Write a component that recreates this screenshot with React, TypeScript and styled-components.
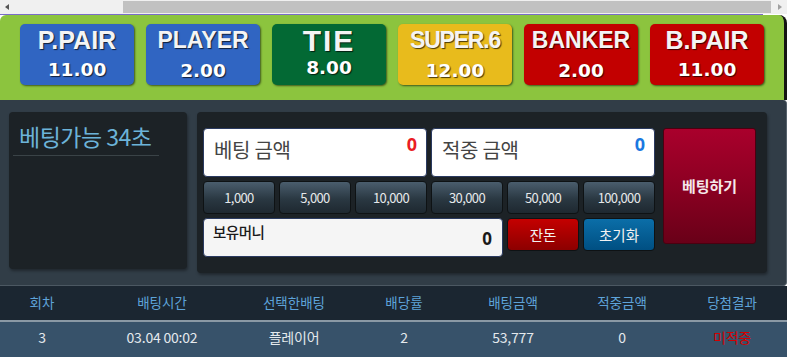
import React from "react";
import styled, { createGlobalStyle } from "styled-components";

const Global = createGlobalStyle`
  html, body { margin: 0; padding: 0; background: #ffffff; }
  body { font-family: "Noto Sans CJK KR", "Noto Sans", sans-serif; overflow: hidden; }
  * { box-sizing: border-box; }
`;

const Page = styled.div`
  width: 787px;
  display: flex;
  flex-direction: column;
`;

const ScrollBar = styled.div`
  height: 14px;
  display: flex;
  background: #f0f0f0;
`;

const ArrowBox = styled.div`
  width: 14px;
  display: flex;
  align-items: center;
  justify-content: center;
`;

const Tri = styled.div<{ $dir: "l" | "r" }>`
  width: 0;
  height: 0;
  border-top: 3.5px solid transparent;
  border-bottom: 3.5px solid transparent;
  ${(p) => (p.$dir === "l" ? "border-right: 4px solid #555;" : "border-left: 4px solid #a0a0a0;")}
`;

const Track = styled.div`
  flex: 1;
  display: flex;
  padding: 1px 2px 1px 109px;
`;

const Thumb = styled.div`
  flex: 1;
  background: #c1c1c1;
`;

const TopLine = styled.div`
  height: 1px;
  width: 763px;
  background: #7a6cc8;
`;

const GreenPanel = styled.div`
  height: 85px;
  background: #8cc43e;
  border-radius: 6px 8px 0 0;
  border-right: 3px solid #141414;
  display: flex;
  gap: 12px;
  padding: 9px 0 0 20px;
`;

const BetButton = styled.div<{ $bg: string }>`
  width: 114px;
  height: 61px;
  background: ${(p) => p.$bg};
  border-radius: 5px;
  box-shadow: 1px 1px 2px rgba(0, 0, 0, 0.55);
  display: flex;
  flex-direction: column;
  align-items: center;
  color: #f4f4f4;
  text-shadow: 1px 1px 1px rgba(0, 0, 0, 0.7);
`;

const BetLabel = styled.div<{ $size: number; $ls: number; $top: number }>`
  font-family: "Liberation Sans", Arial, sans-serif;
  font-weight: bold;
  font-size: ${(p) => p.$size}px;
  letter-spacing: ${(p) => p.$ls}px;
  line-height: ${(p) => p.$size}px;
  margin-top: ${(p) => p.$top}px;
  height: 28px;
  white-space: nowrap;
`;

const BetOdds = styled.div`
  font-family: "DejaVu Sans", Verdana, sans-serif;
  font-weight: bold;
  font-size: 18.5px;
  line-height: 20px;
  color: #ffffff;
  margin-top: 4px;
`;

const DarkSection = styled.div`
  height: 186px;
  background: #313d47;
  border-right: 1px solid #56626c;
  border-bottom: 1px solid #4c5862;
  border-radius: 0 4px 4px 0;
  display: flex;
  align-items: flex-start;
  gap: 10px;
  padding: 12px 0 0 9px;
`;

const TimerPanel = styled.div`
  width: 178px;
  height: 157px;
  background: #1c2226;
  border-radius: 4px;
  box-shadow: 1px 2px 3px rgba(0, 0, 0, 0.35);
  padding: 10px 0 0 4px;
`;

const TimerTitle = styled.div`
  width: 146px;
  font-size: 23px;
  line-height: 28px;
  color: #6cb3d9;
  padding: 0 0 5px 6px;
  border-bottom: 1px solid #3a4347;
  letter-spacing: -0.5px;
  white-space: nowrap;
`;

const BetPanel = styled.div`
  width: 570px;
  height: 161px;
  background: #1c2226;
  border-radius: 4px;
  box-shadow: 1px 2px 3px rgba(0, 0, 0, 0.35);
  display: flex;
  align-items: flex-start;
  gap: 8px;
  padding: 16px 11px 16px 6px;
`;

const BetGrid = styled.div`
  width: 452px;
  display: grid;
  grid-template-columns: repeat(6, 72px);
  grid-template-rows: 49px 33px 39px;
  gap: 4px;
  align-items: start;
`;

const AmountBox = styled.div<{ $span: string }>`
  grid-column: ${(p) => p.$span};
  height: 49px;
  background: #ffffff;
  border: 1px solid #2a3a60;
  border-radius: 4px;
  display: flex;
  justify-content: space-between;
  padding: 4px 9px 0 10px;
`;

const AmountLabel = styled.div`
  font-size: 20px;
  line-height: 26px;
  color: #444444;
  margin-top: 4px;
  letter-spacing: -0.3px;
`;

const AmountValue = styled.div<{ $color: string }>`
  font-size: 18px;
  line-height: 22px;
  font-weight: bold;
  color: ${(p) => p.$color};
  font-family: "Noto Sans", sans-serif;
`;

const Chip = styled.div`
  height: 33px;
  border: 1px solid #0e1214;
  border-radius: 4px;
  background: linear-gradient(to bottom, #4a5d6d 0%, #2a3842 55%, #1e2830 100%);
  color: #e6e8ea;
  font-size: 13px;
  letter-spacing: -0.6px;
  display: flex;
  align-items: center;
  justify-content: center;
`;

const MoneyBox = styled.div`
  grid-column: 1 / 5;
  height: 39px;
  background: #f5f5f5;
  border: 1px solid #2a3a60;
  border-radius: 4px;
  display: flex;
  justify-content: space-between;
  padding: 4px 10px 0 9px;
`;

const MoneyLabel = styled.div`
  font-size: 14.5px;
  line-height: 18px;
  font-weight: 500;
  color: #1a1a1a;
  letter-spacing: -0.5px;
`;

const MoneyValue = styled.div`
  font-family: "Noto Sans", sans-serif;
  font-size: 17px;
  line-height: 20px;
  font-weight: bold;
  color: #1a1a1a;
  margin-top: 6px;
`;

const ActionButton = styled.div<{ $top: string; $bottom: string }>`
  height: 33px;
  border: 1px solid #0e1214;
  border-radius: 4px;
  background: linear-gradient(to bottom, ${(p) => p.$top}, ${(p) => p.$bottom});
  color: #f2f2f2;
  font-size: 14.5px;
  display: flex;
  align-items: center;
  justify-content: center;
`;

const SubmitButton = styled.div`
  width: 93px;
  height: 116px;
  border: 1px solid #4a0010;
  border-radius: 3px;
  background: linear-gradient(to bottom, #a9002c 0%, #8c0022 50%, #690018 100%);
  color: #f5e8ea;
  font-size: 15px;
  font-weight: bold;
  display: flex;
  align-items: center;
  justify-content: center;
  padding-bottom: 2px;
`;

const TableHead = styled.div`
  height: 36px;
  background: #1b2631;
  border-bottom: 2px solid #8a99a5;
  display: grid;
  grid-template-columns: 84px 156px 108px 112px 106px 112px 108px;
  align-items: center;
`;

const HeadCell = styled.div`
  text-align: center;
  font-size: 13.5px;
  color: #5ea3d9;
  padding-bottom: 2px;
`;

const TableRow = styled.div`
  height: 40px;
  background: #37526a;
  display: grid;
  grid-template-columns: 84px 156px 108px 112px 106px 112px 108px;
  align-items: center;
`;

const Cell = styled.div<{ $color?: string }>`
  text-align: center;
  font-size: 14px;
  color: ${(p) => p.$color || "#e4e9ed"};
  padding-bottom: 10px;
  letter-spacing: -0.2px;
`;

const bets = [
  { label: "P.PAIR", odds: "11.00", bg: "#3065c2", size: 25, ls: 0, top: 4 },
  { label: "PLAYER", odds: "2.00", bg: "#3065c2", size: 23, ls: 0, top: 5 },
  { label: "TIE", odds: "8.00", bg: "#036934", size: 30, ls: 2, top: 2 },
  { label: "SUPER.6", odds: "12.00", bg: "#e8bb1c", size: 23, ls: -1.2, top: 5 },
  { label: "BANKER", odds: "2.00", bg: "#c20000", size: 23, ls: 0, top: 5 },
  { label: "B.PAIR", odds: "11.00", bg: "#c20000", size: 25, ls: 0, top: 4 },
];

const chips = ["1,000", "5,000", "10,000", "30,000", "50,000", "100,000"];

const heads = ["회차", "배팅시간", "선택한배팅", "배당률", "배팅금액", "적중금액", "당첨결과"];

export default function App() {
  return (
    <Page>
      <Global />
      <ScrollBar>
        <ArrowBox>
          <Tri $dir="l" />
        </ArrowBox>
        <Track>
          <Thumb />
        </Track>
        <ArrowBox>
          <Tri $dir="r" />
        </ArrowBox>
      </ScrollBar>
      <TopLine />
      <GreenPanel>
        {bets.map((b) => (
          <BetButton key={b.label} $bg={b.bg}>
            <BetLabel $size={b.size} $ls={b.ls} $top={b.top}>
              {b.label}
            </BetLabel>
            <BetOdds>{b.odds}</BetOdds>
          </BetButton>
        ))}
      </GreenPanel>
      <DarkSection>
        <TimerPanel>
          <TimerTitle>베팅가능 34초</TimerTitle>
        </TimerPanel>
        <BetPanel>
          <BetGrid>
            <AmountBox $span="1 / 4">
              <AmountLabel>베팅 금액</AmountLabel>
              <AmountValue $color="#ea1c24">0</AmountValue>
            </AmountBox>
            <AmountBox $span="4 / 7">
              <AmountLabel>적중 금액</AmountLabel>
              <AmountValue $color="#1a78e0">0</AmountValue>
            </AmountBox>
            {chips.map((c) => (
              <Chip key={c}>{c}</Chip>
            ))}
            <MoneyBox>
              <MoneyLabel>보유머니</MoneyLabel>
              <MoneyValue>0</MoneyValue>
            </MoneyBox>
            <ActionButton $top="#c40000" $bottom="#8c0000">
              잔돈
            </ActionButton>
            <ActionButton $top="#0b6ea8" $bottom="#004f82">
              초기화
            </ActionButton>
          </BetGrid>
          <SubmitButton>베팅하기</SubmitButton>
        </BetPanel>
      </DarkSection>
      <TableHead>
        {heads.map((h) => (
          <HeadCell key={h}>{h}</HeadCell>
        ))}
      </TableHead>
      <TableRow>
        <Cell>3</Cell>
        <Cell>03.04 00:02</Cell>
        <Cell>플레이어</Cell>
        <Cell>2</Cell>
        <Cell>53,777</Cell>
        <Cell>0</Cell>
        <Cell $color="#d40000">미적중</Cell>
      </TableRow>
    </Page>
  );
}
